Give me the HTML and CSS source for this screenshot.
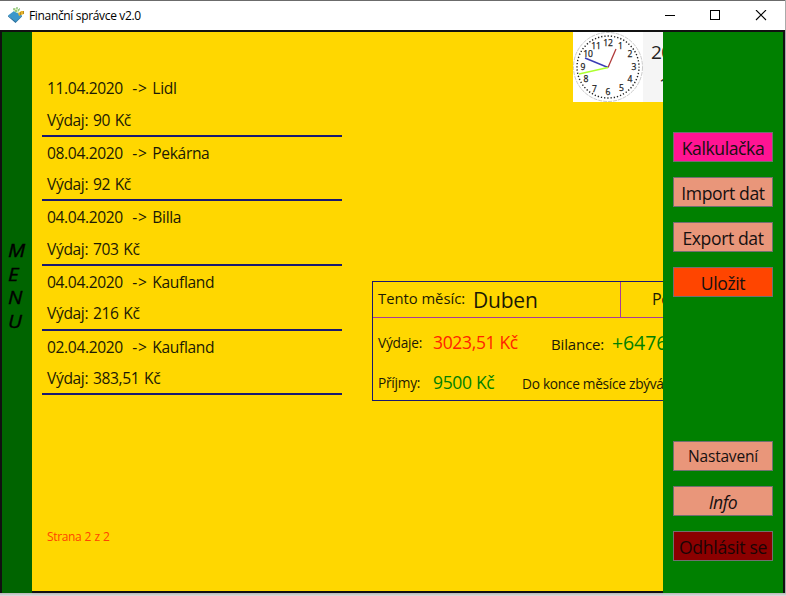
FILE: index.html
```html
<!DOCTYPE html>
<html lang="cs">
<head>
<meta charset="utf-8">
<title>Finanční správce v2.0</title>
<link rel="stylesheet" href="styles.css">
</head>
<body>
<div class="window">
  <header class="titlebar">
    <svg class="app-icon" width="17" height="17" viewBox="0 0 17 17">
      <path d="M0 8.500 6 4l8 4.500-6 6.500z" fill="#3b97cb"/>
      <path d="M0 8.500v1L7.500 16 14 9.500v-1L8 14.500z" fill="#28719f"/>
      <path d="M5 3 7 1l3 1 2 1-2 3-3-1z" fill="#d3ecb4"/>
      <path d="M5 2h2M8 1h2M10 3h1M7 4h2M11 2h1" stroke="#5fa846"/>
      <path d="m10 6 2-1 1-1h3v3l-3 1-2 1z" fill="#e7b52c"/>
      <path d="M12.500 5v3M15.500 4v3" stroke="#b98a1c"/>
    </svg>
    <span class="title">Finanční správce v2.0</span>
    <svg class="controls" width="102" height="12" viewBox="0 0 102 12" fill="none" stroke="#000">
      <path d="M0 5.500h10"/>
      <rect x="45.500" y=".5" width="9" height="9"/>
      <path d="m91 0 10 10M101 0 91 10" stroke-width="1.100"/>
    </svg>
  </header>
  <div class="body">
    <nav class="menu"><span>M</span><span>E</span><span>N</span><span>U</span></nav>
    <main class="content">
      <section class="records">
        <article class="record"><p>11.04.2020&nbsp; <span class="arrow">-&gt;</span> Lidl</p><p>Výdaj: 90 Kč</p></article>
        <article class="record"><p>08.04.2020&nbsp; <span class="arrow">-&gt;</span> Pekárna</p><p>Výdaj: 92 Kč</p></article>
        <article class="record"><p>04.04.2020&nbsp; <span class="arrow">-&gt;</span> Billa</p><p>Výdaj: 703 Kč</p></article>
        <article class="record"><p>04.04.2020&nbsp; <span class="arrow">-&gt;</span> Kaufland</p><p>Výdaj: 216 Kč</p></article>
        <article class="record"><p>02.04.2020&nbsp; <span class="arrow">-&gt;</span> Kaufland</p><p>Výdaj: 383,51 Kč</p></article>
        <p class="page">Strana 2 z 2</p>
      </section>
      <section class="right">
        <div class="clock">
          <svg width="70" height="70" viewBox="0 0 70 70">
            <rect width="70" height="70" fill="#fff"/>
            <circle cx="35" cy="35" r="34.500" fill="none" stroke="#bbb" stroke-width=".8" stroke-dasharray="4 1"/>
            <circle cx="35" cy="35" r="31" fill="none" stroke="#222" stroke-width="1.400" stroke-dasharray="1.300 1.946" stroke-dashoffset=".65"/>
            <g class="numerals">
              <text x="35" y="14">12</text><text x="47.500" y="17">1</text><text x="57" y="25">2</text>
              <text x="61" y="38">3</text><text x="57" y="50">4</text><text x="48.500" y="59">5</text>
              <text x="35" y="63">6</text><text x="21.500" y="60">7</text><text x="13" y="50">8</text>
              <text x="10" y="38">9</text><text x="15" y="25">10</text><text x="23" y="17">11</text>
            </g>
            <path d="M35 35.500 43 17" stroke="#b03a3a" stroke-width="1.300"/>
            <path d="M35 35.500 12 26" stroke="#3b3bb5" stroke-width="1.400"/>
            <path d="M35 35.500 6 42" stroke="#adff2f" stroke-width="1.300"/>
          </svg>
          <div class="date"><p>2020</p><p class="time">12:49</p></div>
        </div>
        <div class="summary">
          <div class="head">
            <div class="month"><span class="month-label">Tento měsíc:</span><span class="month-name">Duben</span></div>
            <div class="compare">Porovnat</div>
          </div>
          <div class="line first"><span class="key">Výdaje:</span><span class="value red">3023,51 Kč</span><span class="bal-label">Bilance:</span><span class="balance">+6476,49 Kč</span></div>
          <div class="line second"><span class="key">Příjmy:</span><span class="value green">9500 Kč</span><span class="rest">Do konce měsíce zbývá</span></div>
        </div>
      </section>
    </main>
    <aside class="actions">
      <button class="pink">Kalkulačka</button>
      <button>Import dat</button>
      <button>Export dat</button>
      <button class="orange">Uložit</button>
      <button class="settings">Nastavení</button>
      <button class="info">Info</button>
      <button class="logout">Odhlásit se</button>
    </aside>
  </div>
</div>
</body>
</html>
```
FILE: styles.css
```css
* { box-sizing: border-box; }
body {
  margin: 0;
  height: 596px;
  overflow: hidden;
  background: linear-gradient(#aaa 0 593px, #b8b8b8 593px, #ddd 596px);
  font-family: "Open Sans", "Noto Sans", sans-serif;
  color: #1c1a05;
}
p { margin: 0; white-space: nowrap; }
.window { width: 785px; height: 593px; }
.titlebar {
  height: 30px;
  display: flex;
  align-items: center;
  padding-left: 8px;
  background: #fff;
  border-top: 1px solid #6b6b6b;
}
.app-icon { margin-right: 4px; }
.title { font-size: 12px; letter-spacing: -.34px; color: #000; margin-top: -1px; }
.controls { margin-left: auto; margin-right: 18px; }
.body {
  display: flex;
  height: 563px;
  border: 2px solid #111;
  border-bottom: 0;
}
.menu {
  width: 30px;
  background: #006400;
  color: #000;
  padding: 207px 0 0 6px;
  display: flex;
  flex-direction: column;
  font-size: 17.500px;
  font-style: italic;
  line-height: 23.700px;
  -webkit-text-stroke: .35px #000;
}
.menu span { transform: scaleX(1.17); transform-origin: left; }
.content {
  width: 631px;
  display: flex;
  overflow: hidden;
  background: #ffd700;
  border-bottom: 2px solid #111;
}
.records { flex: none; width: 300px; margin-left: 10px; padding-top: 40px; }
.record {
  height: 64.650px;
  border-bottom: 2px solid #191970;
  padding: 1px 0 0 5px;
  font-size: 15.600px;
  line-height: 31.500px;
  letter-spacing: -.36px;
  word-spacing: 1px;
}
.arrow { letter-spacing: .7px; }
.page { margin: 133px 0 0 5px; font-size: 12px; line-height: 18px; letter-spacing: -.35px; word-spacing: .5px; color: #ff4500; }
.right { flex: none; width: 500px; margin-left: 30px; }
.clock { display: flex; width: 260px; height: 70px; margin-left: 201px; background: #f5f5f5; }
.clock svg { flex: none; }
.numerals { font: 8.500px "Open Sans", sans-serif; text-anchor: middle; fill: #222; stroke: #222; stroke-width: .25px; }
.date { padding: 4px 0 0 8px; font-size: 19px; line-height: 32px; letter-spacing: -.6px; color: #222; }
.time { padding-left: 8px; }
.summary { width: 497px; height: 120px; margin-top: 179px; border: 1px solid #191970; }
.head { display: flex; height: 36px; border-bottom: 1px solid #a83c98; }
.month { width: 248px; display: flex; border-right: 1px solid #a83c98; padding-left: 5px; }
.month span, .line span { white-space: nowrap; flex: none; }
.month-label { width: 95px; font-size: 14.800px; line-height: 33px; letter-spacing: -.02px; }
.month-name { font-size: 21px; line-height: 36px; letter-spacing: -.2px; }
.compare { padding-left: 31px; font-size: 16px; line-height: 35px; letter-spacing: -.5px; }
.line { display: flex; padding-left: 5px; height: 40px; line-height: 40px; }
.first { padding-top: 4px; }
.second { padding-top: 4px; }
.key { width: 55px; font-size: 13.700px; letter-spacing: -.25px; padding-top: 1px; }
.value { font-size: 17.500px; letter-spacing: -.33px; }
.red { width: 118px; color: #ff2400; }
.green { width: 89px; color: #008000; }
.bal-label { width: 61px; font-size: 15px; letter-spacing: -.15px; padding-top: 2px; }
.balance { font-size: 19.500px; letter-spacing: -.1px; padding-top: 1px; color: #008000; }
.rest { font-size: 13.700px; letter-spacing: -.28px; padding-top: 2px; }
.actions {
  width: 120px;
  padding: 100px 10px 0;
  background: #008000;
  display: flex;
  flex-direction: column;
  gap: 15px;
}
button {
  width: 100px;
  height: 30px;
  padding: 1px 0 0;
  border: 1px solid #707070;
  background: #e9967a;
  color: #161010;
  font: 17.600px/28px "Open Sans", "Noto Sans", sans-serif;
  letter-spacing: -.4px;
  white-space: nowrap;
}
.pink { background: #ff1493; }
.orange { background: #ff4500; }
.settings { margin-top: 129px; font-size: 15.500px; letter-spacing: -.2px; padding: 0; }
.info { font-style: italic; }
.logout { background: #8b0000; color: #1a0505; letter-spacing: -.3px; }
```
